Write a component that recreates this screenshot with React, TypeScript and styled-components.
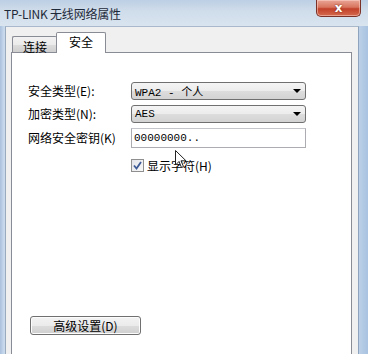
import React from "react";
import styled, { createGlobalStyle } from "styled-components";

const Global = createGlobalStyle`
  html, body { margin: 0; padding: 0; background: #c8d8ea; }
  body { width: 368px; height: 354px; overflow: hidden; }
`;

const FONT = `"Noto Sans CJK SC", "DejaVu Sans", sans-serif`;
const MONO = `"Liberation Mono", "Noto Sans CJK SC", monospace`;

const Window = styled.div`
  width: 368px;
  height: 354px;
  display: flex;
  flex-direction: column;
  background: linear-gradient(90deg, #a9c0dc 0px, #c9daed 4px, #d3e1f0 50%, #c9d9ec 96%, #a8c2e0 100%);
  overflow: hidden;
  font-family: ${FONT};
`;

const TitleBar = styled.div`
  height: 26px;
  flex: none;
  display: flex;
  align-items: flex-start;
  justify-content: space-between;
  padding: 0 6px 0 4px;
  background: linear-gradient(180deg, #bccfe4 0%, #cfdcea 40%, #d9e4ef 100%);
`;

const Title = styled.div`
  margin-top: 6px;
  font-size: 12px;
  line-height: 16px;
  color: #1e2a3a;
  letter-spacing: -0.2px;
`;

const CloseButton = styled.div`
  width: 45px;
  height: 17px;
  margin-right: 1px;
  box-sizing: border-box;
  border: 1px solid #7a3128;
  border-top: none;
  border-radius: 0 0 5px 5px;
  background: linear-gradient(180deg, #e9a596 0%, #d8755f 45%, #c2412a 55%, #d46a4e 100%);
  box-shadow: inset 0 0 0 1px rgba(255, 220, 210, 0.5);
  display: flex;
  align-items: center;
  justify-content: center;
  color: #fff;
  font-family: "DejaVu Sans", sans-serif;
  font-weight: bold;
  font-size: 12px;
  text-shadow: 0 0 2px #6a1d12;
`;

const Body = styled.div`
  flex: 1;
  display: flex;
  margin: 0 9px 0 5px;
  border-left: 1px solid #9aabc0;
  border-right: 1px solid #8ea3bd;
  border-top: 1px solid #a9b8ca;
  background: #f0f0f0;
`;

const Client = styled.div`
  flex: 1;
  display: flex;
  flex-direction: column;
  padding: 6px 6px 0 5px;
`;

const TabStrip = styled.div`
  display: flex;
  align-items: flex-end;
  height: 20px;
  padding-left: 1px;
  position: relative;
  z-index: 1;
  margin-bottom: -1px;
`;

const Tab = styled.div<{ $active?: boolean }>`
  box-sizing: border-box;
  font-size: 12px;
  color: #000;
  border: 1px solid #898c95;
  border-radius: 2px 2px 0 0;
  display: flex;
  justify-content: center;
  ${(p) =>
    p.$active
      ? `
    height: 21px;
    width: 50px;
    background: #fff;
    border-bottom: none;
    margin-left: -1px;
    padding-top: 1px;
    line-height: 16px;
  `
      : `
    height: 17px;
    width: 45px;
    background: linear-gradient(180deg, #f2f2f2 0%, #ebebeb 50%, #dddddd 51%, #cfcfcf 100%);
    border-right: none;
    line-height: 17px;
    padding-top: 1px;
  `}
`;

const Panel = styled.div`
  flex: 1;
  background: #fff;
  border: 1px solid #898c95;
  border-bottom: none;
  display: flex;
  flex-direction: column;
  padding: 29px 0 0 16px;
  position: relative;
`;

const Form = styled.div`
  display: grid;
  grid-template-columns: 103px 175px;
  row-gap: 5px;
  align-items: center;
`;

const Label = styled.div`
  font-size: 12px;
  color: #000;
  line-height: 16px;
  white-space: nowrap;
`;

const Combo = styled.div`
  box-sizing: border-box;
  height: 18px;
  border: 1px solid #707070;
  border-radius: 3px;
  background: linear-gradient(180deg, #f4f4f4 0%, #ececec 50%, #dddddd 51%, #d3d3d3 100%);
  display: flex;
  align-items: center;
  justify-content: space-between;
  padding: 0 4px 0 3px;
  font-family: ${MONO};
  font-size: 11px;
  color: #000;
`;

const Arrow = styled.span`
  width: 0;
  height: 0;
  border-left: 4px solid transparent;
  border-right: 4px solid transparent;
  border-top: 4px solid #000;
`;

const TextBox = styled.div`
  box-sizing: border-box;
  height: 20px;
  border: 1px solid #abadb3;
  border-top-color: #c4c6cc;
  background: #fff;
  display: flex;
  align-items: center;
  padding: 0 2px;
  font-family: ${MONO};
  font-size: 11px;
  color: #000;
`;

const CheckRow = styled.label`
  grid-column: 2;
  display: flex;
  align-items: center;
  gap: 3px;
  margin-top: 4px;
  font-size: 12px;
  color: #000;
`;

const Box = styled.span`
  width: 13px;
  height: 13px;
  box-sizing: border-box;
  border: 1px solid #8f8f8f;
  background: linear-gradient(135deg, #e2e4ea 0%, #f8f8f8 100%);
  display: flex;
  align-items: center;
  justify-content: center;
`;

const Spacer = styled.div`
  height: 142px;
`;

const Button = styled.div`
  box-sizing: border-box;
  width: 111px;
  height: 19px;
  margin-left: 2px;
  border: 1px solid #707070;
  border-radius: 3px;
  background: linear-gradient(180deg, #f3f3f3 0%, #ebebeb 50%, #dddddd 51%, #cfcfcf 100%);
  box-shadow: inset 0 0 0 1px #fcfcfc;
  display: flex;
  align-items: center;
  justify-content: center;
  font-size: 12px;
  color: #000;
`;

const Cursor = styled.svg`
  position: absolute;
  left: 163px;
  top: 97px;
`;

export default function App() {
  return (
    <>
      <Global />
      <Window>
        <TitleBar>
          <Title>TP-LINK 无线网络属性</Title>
          <CloseButton>x</CloseButton>
        </TitleBar>
        <Body>
          <Client>
            <TabStrip>
              <Tab>连接</Tab>
              <Tab $active>安全</Tab>
            </TabStrip>
            <Panel>
              <Form>
                <Label>安全类型(E):</Label>
                <Combo>
                  <span>WPA2 - 个人</span>
                  <Arrow />
                </Combo>
                <Label>加密类型(N):</Label>
                <Combo>
                  <span>AES</span>
                  <Arrow />
                </Combo>
                <Label>网络安全密钥(K)</Label>
                <TextBox>00000000..</TextBox>
                <CheckRow>
                  <Box>
                    <svg width="9" height="9" viewBox="0 0 9 9">
                      <path d="M1 4.5 L3.5 7.5 L8 1" fill="none" stroke="#3d5a96" strokeWidth="1.8" />
                    </svg>
                  </Box>
                  显示字符(H)
                </CheckRow>
              </Form>
              <Spacer />
              <Button>高级设置(D)</Button>
              <Cursor width="12" height="19" viewBox="0 0 12 19">
                <path d="M0.5 0.5 L0.5 15 L4 11.5 L6.5 17.5 L8.5 16.5 L6 10.8 L11 10.8 Z" fill="#fff" stroke="#222" strokeWidth="1" />
              </Cursor>
            </Panel>
          </Client>
        </Body>
      </Window>
    </>
  );
}
